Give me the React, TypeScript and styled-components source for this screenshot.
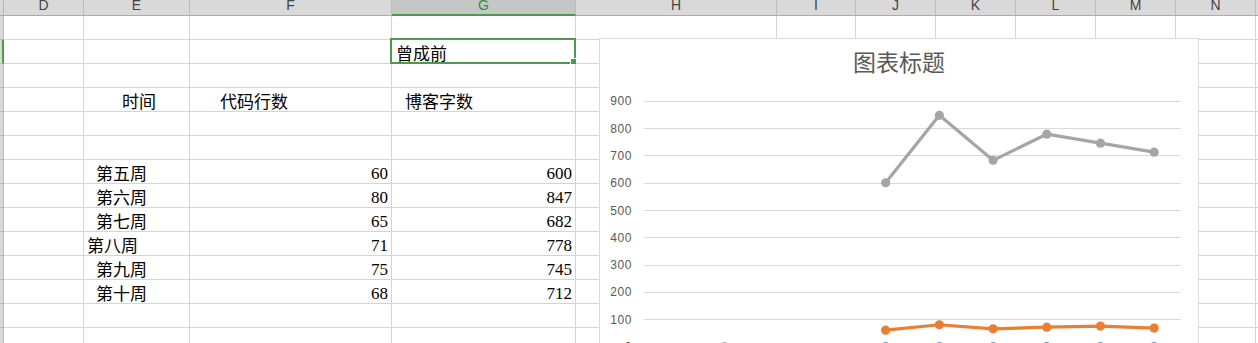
import React from 'react';
import styled, { createGlobalStyle } from 'styled-components';

const Global = createGlobalStyle`
  html, body { margin: 0; padding: 0; background: #fff; overflow: hidden; }
  body { width: 1258px; height: 343px; font-family: "Liberation Sans", "Noto Sans CJK SC", sans-serif; }
`;

const GREEN = '#44a045';
const GRID = '#d4d4d4';

type Col = { k: string; w: number };
const COLS: Col[] = [
  { k: 'D', w: 80 }, { k: 'E', w: 106 }, { k: 'F', w: 202 }, { k: 'G', w: 184 },
  { k: 'H', w: 201 }, { k: 'I', w: 79 }, { k: 'J', w: 80 }, { k: 'K', w: 80 },
  { k: 'L', w: 80 }, { k: 'M', w: 80 }, { k: 'N', w: 80 }, { k: 'O', w: 80 },
];

const Sheet = styled.div`
  position: relative;
  width: 1258px;
  height: 343px;
  overflow: hidden;
  background: #fff;
`;

const HeaderRow = styled.div`
  display: flex;
  height: 16px;
`;

const Corner = styled.div`
  flex: 0 0 4px;
  box-sizing: border-box;
  background: #d9d9d9;
  border-right: 1px solid #b8b8b8;
  border-bottom: 1px solid #ababab;
`;

const ColHead = styled.div<{ $w: number; $active?: boolean }>`
  flex: 0 0 ${p => p.$w}px;
  box-sizing: border-box;
  height: 16px;
  overflow: hidden;
  background: ${p => (p.$active ? '#c6c6c6' : '#d9d9d9')};
  border-right: 1px solid #bdbdbd;
  border-bottom: ${p => (p.$active ? `2px solid ${GREEN}` : '1px solid #ababab')};
  color: ${p => (p.$active ? '#2f8f33' : '#444')};
  font-family: "Liberation Sans", sans-serif;
  font-size: 14px;
  line-height: 10px;
  text-align: center;
`;

const Row = styled.div`
  display: flex;
  height: 24px;
`;

const RowHead = styled.div<{ $active?: boolean }>`
  flex: 0 0 4px;
  box-sizing: border-box;
  background: #d9d9d9;
  border-right: ${p => (p.$active ? `2px solid ${GREEN}` : '1px solid #b8b8b8')};
  border-bottom: 1px solid #b8b8b8;
`;

const Cell = styled.div<{ $w: number; $align?: 'left' | 'right'; $pad?: number; $num?: boolean }>`
  position: relative;
  flex: 0 0 ${p => p.$w}px;
  box-sizing: border-box;
  height: 24px;
  border-right: 1px solid ${GRID};
  border-bottom: 1px solid ${GRID};
  display: flex;
  align-items: flex-end;
  justify-content: ${p => (p.$align === 'right' ? 'flex-end' : 'flex-start')};
  padding-left: ${p => p.$pad ?? 3}px;
  padding-right: 3px;
  padding-bottom: ${p => (p.$num ? 1 : 2)}px;
  color: #000;
  font-family: ${p => (p.$num ? '"Liberation Serif", serif' : '"Noto Sans CJK SC", sans-serif')};
  font-size: 17px;
  line-height: 17px;
  white-space: nowrap;
`;

const Selection = styled.span`
  position: absolute;
  left: -2px;
  top: -2px;
  right: -1px;
  bottom: -1px;
  border: 2px solid ${GREEN};
  pointer-events: none;
`;

const Handle = styled.span`
  position: absolute;
  right: -3px;
  bottom: -3px;
  width: 5px;
  height: 5px;
  background: ${GREEN};
  border: 1px solid #fff;
  box-sizing: content-box;
`;

const Chart = styled.div`
  position: absolute;
  left: 599px;
  top: 38px;
  width: 600px;
  height: 330px;
  box-sizing: border-box;
  background: #fff;
  border: 1px solid #d9d9d9;
`;

const ChartTitle = styled.div`
  position: relative;
  z-index: 1;
  padding-top: 7px;
  text-align: center;
  color: #595959;
  font-family: "Noto Sans CJK SC", sans-serif;
  font-size: 23px;
  line-height: 30px;
`;

const Plot = styled.svg`
  position: absolute;
  left: 0;
  top: 0;
  overflow: visible;
`;

type CellDef = { col: string; text: string; align?: 'left' | 'right'; pad?: number; num?: boolean; sel?: boolean };

const weeks = ['第五周', '第六周', '第七周', '第八周', '第九周', '第十周'];
const code = [60, 80, 65, 71, 75, 68];
const blog = [600, 847, 682, 778, 745, 712];

const rows: CellDef[][] = [
  [],
  [{ col: 'G', text: '曾成前', pad: 4, sel: true }],
  [],
  [
    { col: 'E', text: '时间', pad: 38 },
    { col: 'F', text: '代码行数', pad: 30 },
    { col: 'G', text: '博客字数', pad: 13 },
  ],
  [],
  [],
  ...weeks.map((w, i) => [
    { col: 'E', text: w, pad: w === '第八周' ? 3 : 12 },
    { col: 'F', text: String(code[i]), align: 'right' as const, num: true },
    { col: 'G', text: String(blog[i]), align: 'right' as const, num: true },
  ]),
  [],
  [],
  [],
];

const X0 = 644;
const X1 = 1181;
const CW = (X1 - X0) / 10;
const cx = (i: number) => X0 + CW * (i + 0.5);
const y0 = 346.6;
const cy = (v: number) => y0 - v * 0.2731;

const LineSeries: React.FC<{ pts: [number, number][]; color: string }> = ({ pts, color }) => (
  <g>
    <polyline
      points={pts.map(([i, v]) => `${cx(i)},${cy(v)}`).join(' ')}
      fill="none"
      stroke={color}
      strokeWidth={3.2}
      strokeLinejoin="round"
    />
    {pts.map(([i, v]) => (
      <circle key={i} cx={cx(i)} cy={cy(v)} r={4.6} fill={color} />
    ))}
  </g>
);

const ChartView: React.FC = () => {
  const ticks = [0, 100, 200, 300, 400, 500, 600, 700, 800, 900];
  return (
    <Chart>
      <Plot width={598} height={328}>
        <g transform="translate(-600,-39)">
          {ticks.filter(t => t > 0).map(t => (
            <line key={t} x1={X0} x2={X1} y1={Math.round(cy(t)) + 0.5} y2={Math.round(cy(t)) + 0.5} stroke="#d9d9d9" strokeWidth={1} />
          ))}
          {ticks.map(t => (
            <text
              key={t}
              x={632}
              y={cy(t) + 4.5}
              textAnchor="end"
              fontFamily='"Liberation Sans", sans-serif'
              fontSize={12}
              letterSpacing={0.6}
              fill="#595959"
            >
              {t}
            </text>
          ))}
          <LineSeries pts={[4, 5, 6, 7, 8, 9].map(i => [i, 0] as [number, number])} color="#5b9bd5" />
          <circle cx={cx(1)} cy={cy(0)} r={4.5} fill="#a5a5a5" />
          <LineSeries pts={code.map((v, k) => [k + 4, v] as [number, number])} color="#ed7d31" />
          <LineSeries pts={blog.map((v, k) => [k + 4, v] as [number, number])} color="#a5a5a5" />
        </g>
      </Plot>
      <ChartTitle>图表标题</ChartTitle>
    </Chart>
  );
};

export default function App() {
  return (
    <Sheet>
      <Global />
      <HeaderRow>
        <Corner />
        {COLS.map(c => (
          <ColHead key={c.k} $w={c.w} $active={c.k === 'G'}>{c.k}</ColHead>
        ))}
      </HeaderRow>
      {rows.map((r, ri) => (
        <Row key={ri}>
          <RowHead $active={ri === 1} />
          {COLS.map(c => {
            const d = r.find(x => x.col === c.k);
            return (
              <Cell key={c.k} $w={c.w} $align={d?.align} $pad={d?.pad} $num={d?.num}>
                {d?.text}
                {d?.sel && (
                  <Selection>
                    <Handle />
                  </Selection>
                )}
              </Cell>
            );
          })}
        </Row>
      ))}
      <ChartView />
    </Sheet>
  );
}
